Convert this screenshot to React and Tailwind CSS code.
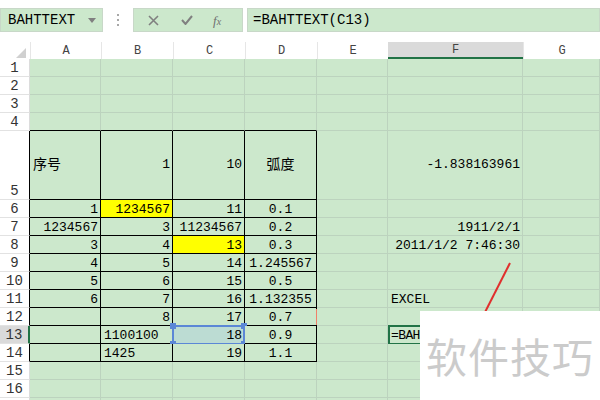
import React from 'react'

const COLS = ['A', 'B', 'C', 'D', 'E', 'F', 'G']
const widths = ['w-[71px]', 'w-[72px]', 'w-[72px]', 'w-[72px]', 'w-[71px]', 'w-[135px]', 'w-[77px]']

// cell data: row -> col index -> [text, align]
const data = {
  5: { 0: ['序号', 'l'], 1: ['1', 'r'], 2: ['10', 'r'], 3: ['弧度', 'c'], 5: ['-1.838163961', 'r'] },
  6: { 0: ['1', 'r'], 1: ['1234567', 'r'], 2: ['11', 'r'], 3: ['0.1', 'c'] },
  7: { 0: ['1234567', 'r'], 1: ['3', 'r'], 2: ['11234567', 'r'], 3: ['0.2', 'c'], 5: ['1911/2/1', 'r'] },
  8: { 0: ['3', 'r'], 1: ['4', 'r'], 2: ['13', 'r'], 3: ['0.3', 'c'], 5: ['2011/1/2 7:46:30', 'r'] },
  9: { 0: ['4', 'r'], 1: ['5', 'r'], 2: ['14', 'r'], 3: ['1.245567', 'c'] },
  10: { 0: ['5', 'r'], 1: ['6', 'r'], 2: ['15', 'r'], 3: ['0.5', 'c'] },
  11: { 0: ['6', 'r'], 1: ['7', 'r'], 2: ['16', 'r'], 3: ['1.132355', 'c'], 5: ['EXCEL', 'l'] },
  12: { 1: ['8', 'r'], 2: ['17', 'r'], 3: ['0.7', 'c'] },
  13: { 1: ['1100100', 'l'], 2: ['18', 'r'], 3: ['0.9', 'c'], 5: ['=BAH', 'l'] },
  14: { 1: ['1425', 'l'], 2: ['19', 'r'], 3: ['1.1', 'c'] },
}

const alignCls = { l: 'justify-start pl-[3px]', r: 'justify-end pr-[2px]', c: 'justify-center' }

function Cell({ row, col }) {
  const inTable = row >= 5 && row <= 14 && col <= 3
  const topOfTable = row === 4 && col <= 3
  const yellow = (row === 6 && col === 1) || (row === 8 && col === 2)
  const selected = row === 13 && col === 2
  const active = row === 13 && col === 5
  const d = data[row] && data[row][col]
  const border = inTable
    ? 'border-r border-b border-black'
    : topOfTable
      ? 'border-r border-b border-r-[#bcd3be] border-b-black'
      : 'border-r border-b border-[#bcd3be]'
  const bg = yellow ? 'bg-[#ffff00]' : selected ? 'bg-[#bcdcd3]' : 'bg-[#cce8cc]'
  const va = row === 5 ? 'items-center' : 'items-end'
  let textCls = 'leading-none pb-[1px]'
  if (d && (d[0] === '序号' || d[0] === '弧度')) textCls = 'text-[14px] leading-none'
  if (active) textCls = 'leading-none pb-[1px] tracking-[-0.6px]'
  return (
    <div className={`relative flex shrink-0 ${widths[col]} ${border} ${bg} ${va} ${d ? alignCls[d[1]] : ''} whitespace-nowrap`}>
      {d && <span className={textCls}>{d[0]}</span>}
      {selected && (
        <div className="absolute left-[-1px] top-[-1px] w-[73px] h-[20px] border-2 border-[#5b87d6]">
          <div className="absolute left-[-4px] top-[-4px] w-[6px] h-[6px] bg-[#5b87d6]" />
          <div className="absolute right-[-4px] top-[-4px] w-[6px] h-[6px] bg-[#5b87d6]" />
          <div className="absolute left-[-4px] bottom-[-4px] w-[6px] h-[6px] bg-[#5b87d6]" />
          <div className="absolute right-[-4px] bottom-[-4px] w-[6px] h-[6px] bg-[#5b87d6]" />
        </div>
      )}
      {active && <div className="absolute left-0 top-[-1px] w-[135px] h-[20px] border-2 border-[#217346]" />}
      {row === 12 && col === 3 && <div className="absolute right-[-2px] top-[1px] w-[2px] h-[16px] bg-[#f0806a]" />}
    </div>
  )
}

function Row({ row }) {
  const h = row === 5 ? 'h-[69px]' : 'h-[18px]'
  const hdrActive = row === 13
  const hdrBorder = hdrActive
    ? 'bg-[#dadada] border-r-2 border-r-[#217346]'
    : row >= 5 && row <= 14
      ? 'bg-white border-r border-r-black'
      : 'bg-white border-r border-r-[#dcdcdc]'
  return (
    <div className={`flex ${h}`}>
      <div className={`w-[30px] shrink-0 flex items-end justify-center pb-[1px] border-b border-b-[#e2e2e2] text-[14px] leading-none text-[#333] ${hdrBorder}`}>
        {row <= 16 ? row : ''}
      </div>
      {COLS.map((c, i) => (
        <Cell key={c} row={row} col={i} />
      ))}
    </div>
  )
}

export default function App() {
  const rows = Array.from({ length: 17 }, (_, i) => i + 1)
  return (
    <div className="relative w-[600px] h-[400px] overflow-hidden bg-white text-[13px] text-black font-['Liberation_Mono','Noto_Sans_CJK_SC',monospace]">
      {/* toolbar */}
      <div className="flex items-center h-[42px] pt-[8px] pb-[10px]">
        <div className="flex items-center w-[103px] h-[24px] bg-[#cce8cc] border border-[#c8d8c8] pl-[7px]">
          <span className="text-[14px] leading-none">BAHTTEXT</span>
          <svg className="ml-auto mr-[6px]" width="8" height="5" viewBox="0 0 8 5"><path d="M0 0h8L4 5z" fill="#808080" /></svg>
        </div>
        <div className="w-[30px] flex flex-col items-center gap-[3px]">
          <div className="w-[2px] h-[2px] bg-[#a8a8a8]" />
          <div className="w-[2px] h-[2px] bg-[#a8a8a8]" />
          <div className="w-[2px] h-[2px] bg-[#a8a8a8]" />
        </div>
        <div className="flex items-center w-[110px] h-[24px] bg-[#cce8cc] border border-[#c8d8c8]">
          <svg className="ml-[14px]" width="11" height="11" viewBox="0 0 11 11"><path d="M1 1l9 9M10 1l-9 9" stroke="#808080" strokeWidth="1.6" /></svg>
          <svg className="ml-[22px]" width="12" height="10" viewBox="0 0 12 10"><path d="M1 5l3.5 4L11 1" stroke="#808080" strokeWidth="2" fill="none" /></svg>
          <span className="ml-[20px] italic text-[13px] text-[#707070] font-['Liberation_Serif',serif] leading-none">f<span className="text-[10px]">x</span></span>
        </div>
        <div className="flex items-center ml-[4px] flex-1 h-[24px] bg-[#cce8cc] border border-[#c8d8c8] pl-[5px]">
          <span className="text-[14px] leading-none">=BAHTTEXT(C13)</span>
        </div>
      </div>
      {/* column header */}
      <div className="flex h-[17px] text-[12px] text-[#444]">
        <div className="w-[30px] shrink-0 relative">
          <svg className="absolute right-[4px] bottom-[1px]" width="10" height="10" viewBox="0 0 10 10"><path d="M10 0v10H0z" fill="#d0d0d0" /></svg>
        </div>
        {COLS.map((c, i) => (
          <div
            key={c}
            className={`${widths[i]} shrink-0 flex items-center justify-center leading-none ${c === 'F' ? 'bg-[#dadada] border-b-2 border-b-[#217346]' : 'border-l border-l-[#e6e6e6]'}`}
          >
            {c}
          </div>
        ))}
      </div>
      {rows.map(r => (
        <Row key={r} row={r} />
      ))}
      {/* red annotation line */}
      <svg className="absolute left-0 top-0 pointer-events-none" width="600" height="400">
        <line x1="510" y1="263" x2="478" y2="326" stroke="#e0302e" strokeWidth="2" />
      </svg>
      {/* watermark */}
      <div className="absolute left-[420px] top-[311px] w-[180px] h-[89px] bg-white flex items-center justify-center">
        <span className="text-[41px] leading-none text-[#cbcbcb] font-['Noto_Sans_CJK_SC',sans-serif] tracking-[1px]">软件技巧</span>
      </div>
    </div>
  )
}
